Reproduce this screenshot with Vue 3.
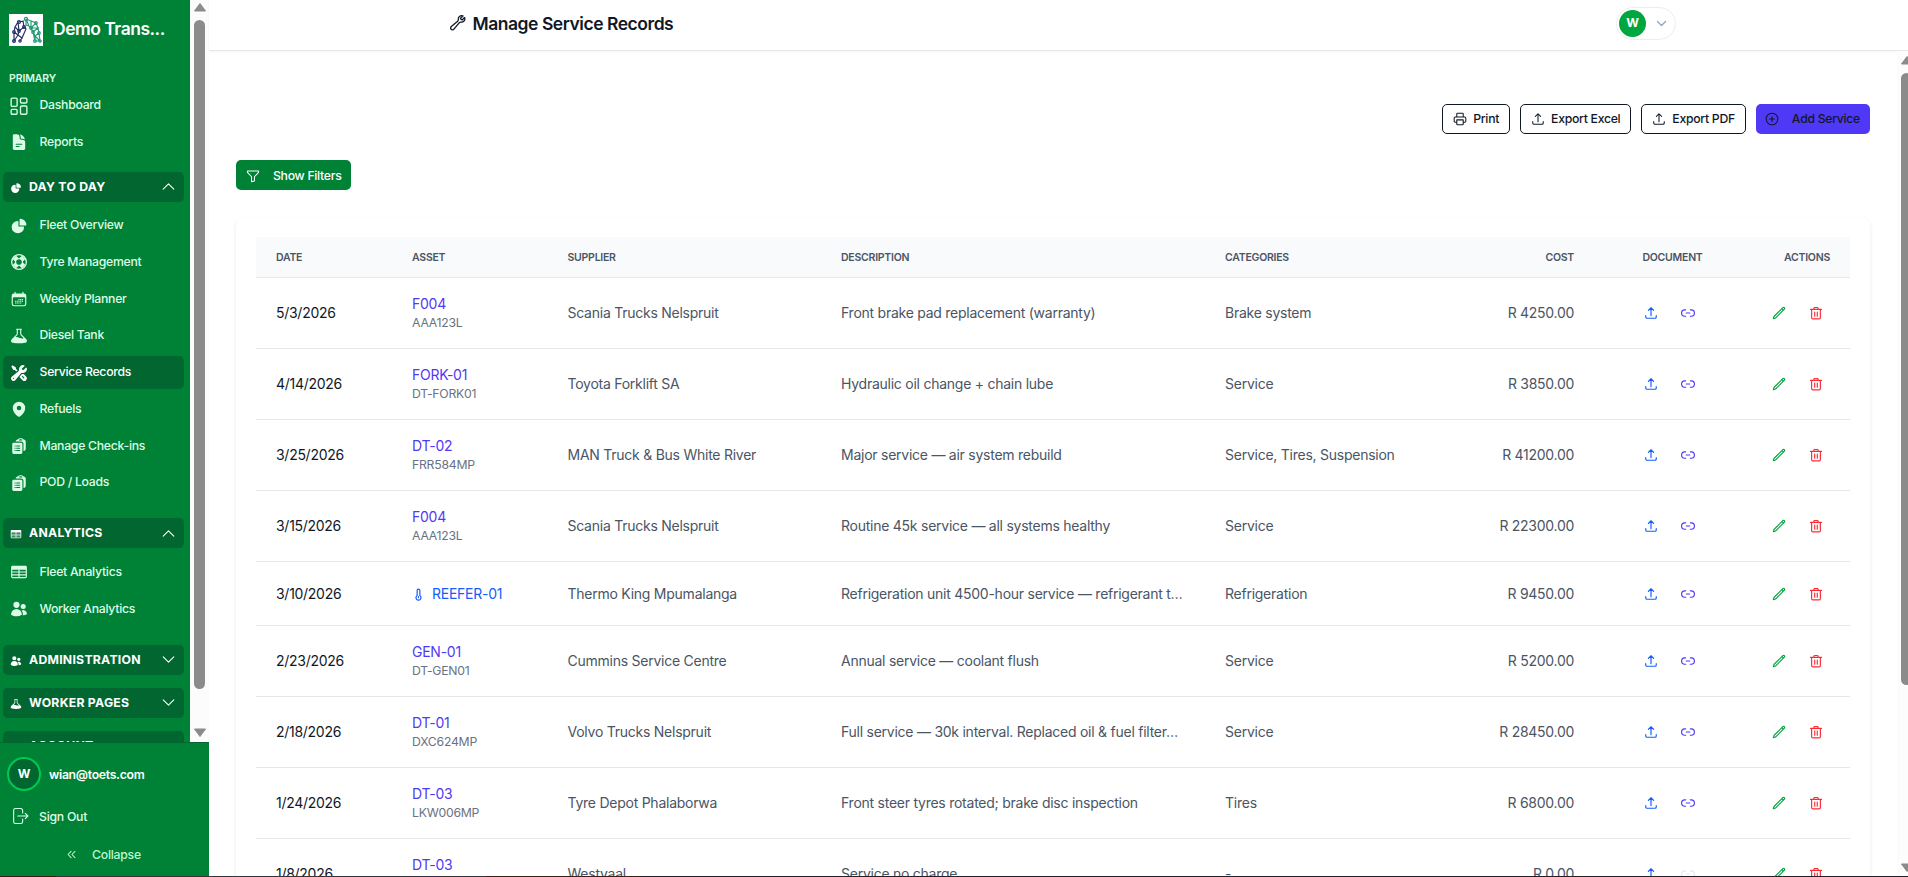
<script setup>

import { ref } from 'vue';

// solid icons (24x24), each one is a list of paths
const solid = {
    pie: [
        'M2.25 13.5a8.25 8.25 0 0 1 8.25-8.25.75.75 0 0 1 .75.75v6.75H18a.75.75 0 0 1 .75.75 8.25 8.25 0 0 1-16.5 0Z',
        'M12.75 3a.75.75 0 0 1 .75-.75 8.25 8.25 0 0 1 8.25 8.25.75.75 0 0 1-.75.75h-7.5a.75.75 0 0 1-.75-.75V3Z'
    ],
    report: [
        'M5.625 1.5c-1.036 0-1.875.84-1.875 1.875v17.25c0 1.035.84 1.875 1.875 1.875h12.75c1.035 0 1.875-.84 1.875-1.875V12.75A3.75 3.75 0 0 0 16.5 9h-1.875a1.875 1.875 0 0 1-1.875-1.875V5.25A3.75 3.75 0 0 0 9 1.5H5.625ZM7.5 15a.75.75 0 0 1 .75-.75h7.5a.75.75 0 0 1 0 1.5h-7.5A.75.75 0 0 1 7.5 15Zm.75 2.25a.75.75 0 0 0 0 1.5H12a.75.75 0 0 0 0-1.5H8.25Z',
        'M12.971 1.816A5.23 5.23 0 0 1 14.25 5.25v1.875c0 .207.168.375.375.375H16.5a5.23 5.23 0 0 1 3.434 1.279 9.768 9.768 0 0 0-6.963-6.963Z'
    ],
    calendar: [
        'M6.75 2.25A.75.75 0 0 1 7.5 3v1.5h9V3A.75.75 0 0 1 18 3v1.5h.75a3 3 0 0 1 3 3v11.25a3 3 0 0 1-3 3H5.25a3 3 0 0 1-3-3V7.5a3 3 0 0 1 3-3H6V3a.75.75 0 0 1 .75-.75Zm13.5 9a1.5 1.5 0 0 0-1.5-1.5H5.25a1.5 1.5 0 0 0-1.5 1.5v7.5a1.5 1.5 0 0 0 1.5 1.5h13.5a1.5 1.5 0 0 0 1.5-1.5v-7.5Z',
        'M11.2 12h1.5v1.5h-1.5zM13.5 12H15v1.5h-1.5zM15.8 12h1.5v1.5h-1.5zM6.8 14.3h1.5v1.5H6.8zM9 14.3h1.5v1.5H9zM11.2 14.3h1.5v1.5h-1.5zM13.5 14.3H15v1.5h-1.5zM15.8 14.3h1.5v1.5h-1.5zM6.8 16.6h1.5v1.5H6.8zM9 16.6h1.5v1.5H9zM11.2 16.6h1.5v1.5h-1.5zM13.5 16.6H15v1.5h-1.5z'
    ],
    beaker: [
        'M10.5 3.798v5.02a3 3 0 0 1-.879 2.121l-2.377 2.377a9.845 9.845 0 0 1 5.091 1.013 8.315 8.315 0 0 0 5.713.636l.285-.071-3.954-3.955a3 3 0 0 1-.879-2.121v-5.02a23.614 23.614 0 0 0-3 0Zm4.5.138a.75.75 0 0 0 .093-1.495A24.837 24.837 0 0 0 12 2.25a25.048 25.048 0 0 0-3.093.191A.75.75 0 0 0 9 3.936v4.882a1.5 1.5 0 0 1-.44 1.06l-6.293 6.294c-1.62 1.621-.903 4.475 1.471 4.88 2.686.46 5.447.698 8.262.698 2.816 0 5.576-.239 8.262-.697 2.373-.406 3.092-3.26 1.47-4.881L15.44 9.879A1.5 1.5 0 0 1 15 8.818V3.936Z'
    ],
    tools: [
        'M12 6.75a5.25 5.25 0 0 1 6.775-5.025.75.75 0 0 1 .313 1.248l-3.32 3.319c.063.475.276.934.641 1.299.365.365.824.578 1.3.64l3.318-3.319a.75.75 0 0 1 1.248.313 5.25 5.25 0 0 1-5.472 6.756c-1.018-.086-1.87.1-2.309.634L7.344 21.3A3.298 3.298 0 1 1 2.7 16.657l8.684-7.151c.533-.44.72-1.291.634-2.309A5.342 5.342 0 0 1 12 6.75ZM4.117 19.125a.75.75 0 0 1 .75-.75h.008a.75.75 0 0 1 .75.75v.008a.75.75 0 0 1-.75.75h-.008a.75.75 0 0 1-.75-.75v-.008Z',
        'm10.076 8.64-2.201-2.2V4.874a.75.75 0 0 0-.364-.643l-3.75-2.25a.75.75 0 0 0-.916.113l-.75.75a.75.75 0 0 0-.113.916l2.25 3.75a.75.75 0 0 0 .643.364h1.564l2.062 2.062 1.575-1.297Z',
        'm12.556 17.329 4.183 4.182a3.375 3.375 0 0 0 4.773-4.773l-3.306-3.305a6.803 6.803 0 0 1-1.53.043c-.394-.034-.682-.006-.867.042a.589.589 0 0 0-.167.063l-3.086 3.748Zm3.414-1.36a.75.75 0 0 1 1.06 0l1.875 1.876a.75.75 0 1 1-1.06 1.06L15.97 17.03a.75.75 0 0 1 0-1.06Z'
    ],
    pin: [
        'm11.54 22.351.07.04.028.016a.76.76 0 0 0 .723 0l.028-.015.071-.041a16.975 16.975 0 0 0 1.144-.742 19.58 19.58 0 0 0 2.683-2.282c1.944-1.99 3.963-4.98 3.963-8.827a8.25 8.25 0 0 0-16.5 0c0 3.846 2.02 6.837 3.963 8.827a19.58 19.58 0 0 0 2.682 2.282 16.975 16.975 0 0 0 1.145.742ZM12 13.5a3 3 0 1 0 0-6 3 3 0 0 0 0 6Z'
    ],
    clipboard: [
        'M7.502 6h7.128A3.375 3.375 0 0 1 18 9.375v9.375a3 3 0 0 0 3-3V6.108c0-1.505-1.125-2.811-2.664-2.94a48.972 48.972 0 0 0-.673-.05A3 3 0 0 0 15 1.5h-1.5a3 3 0 0 0-2.663 1.618c-.225.015-.45.032-.673.05C8.662 3.295 7.554 4.542 7.502 6ZM13.5 3A1.5 1.5 0 0 0 12 4.5h4.5A1.5 1.5 0 0 0 15 3h-1.5Z',
        'M3 9.375C3 8.339 3.84 7.5 4.875 7.5h9.75c1.036 0 1.875.84 1.875 1.875v11.25c0 1.035-.84 1.875-1.875 1.875h-9.75A1.875 1.875 0 0 1 3 20.625V9.375ZM6 11.25h1.5v1.5H6zM8.25 11.25h5.25v1.5H8.25zM6 14.25h1.5v1.5H6zM8.25 14.25h5.25v1.5H8.25zM6 17.25h1.5v1.5H6zM8.25 17.25h5.25v1.5H8.25z'
    ],
    table: [
        'M1.5 5.625c0-1.036.84-1.875 1.875-1.875h17.25c1.035 0 1.875.84 1.875 1.875v12.75c0 1.035-.84 1.875-1.875 1.875H3.375A1.875 1.875 0 0 1 1.5 18.375V5.625ZM12.75 9H21v2.25h-8.25zM12.75 12.75H21V15h-8.25zM12.75 16.5H21v2.25h-8.25zM3 9h8.25v2.25H3zM3 12.75h8.25V15H3zM3 16.5h8.25v2.25H3z'
    ],
    users: [
        'M4.5 6.375a4.125 4.125 0 1 1 8.25 0 4.125 4.125 0 0 1-8.25 0ZM14.25 8.625a3.375 3.375 0 1 1 6.75 0 3.375 3.375 0 0 1-6.75 0ZM1.5 19.125a7.125 7.125 0 0 1 14.25 0v.003l-.001.119a.75.75 0 0 1-.363.63 13.067 13.067 0 0 1-6.761 1.873c-2.472 0-4.786-.684-6.76-1.873a.75.75 0 0 1-.364-.63l-.001-.122ZM17.25 19.128l-.001.144a2.25 2.25 0 0 1-.233.96 10.088 10.088 0 0 0 5.06-1.01.75.75 0 0 0 .42-.643 4.875 4.875 0 0 0-6.957-4.611 8.586 8.586 0 0 1 1.71 5.157v.003Z'
    ]
}

// outline icons (24x24)
const line = {
    upload: 'M3 16.5v2.25A2.25 2.25 0 0 0 5.25 21h13.5A2.25 2.25 0 0 0 21 18.75V16.5m-13.5-9L12 3m0 0 4.5 4.5M12 3v13.5',
    link: 'M8 6.5H6.5a5.5 5.5 0 0 0 0 11H8M16 6.5h1.5a5.5 5.5 0 0 1 0 11H16M9 12h6',
    pencil: 'm16.862 4.487 1.687-1.688a1.875 1.875 0 1 1 2.652 2.652L6.832 19.82a4.5 4.5 0 0 1-1.897 1.13l-2.685.8.8-2.685a4.5 4.5 0 0 1 1.13-1.897L16.863 4.487Zm0 0L19.5 7.125',
    trash: 'M2.5 5.8h19M8.5 5.8V3.5a1 1 0 0 1 1-1h5a1 1 0 0 1 1 1v2.3M4.5 5.8V20a2 2 0 0 0 2 2h11a2 2 0 0 0 2-2V5.8M9.8 10.5v7M14.2 10.5v7',
    funnel: 'M2.5 3.5h19v2.2l-7 7.6v7.2l-5 1.3v-8.5l-7-7.6Z',
    printer: 'M6.5 8.5V3a1 1 0 0 1 1-1h9a1 1 0 0 1 1 1v5.5M6 17.5H4a2 2 0 0 1-2-2v-5a2 2 0 0 1 2-2h16a2 2 0 0 1 2 2v5a2 2 0 0 1-2 2h-2M6.5 13.5h11V21a1 1 0 0 1-1 1h-9a1 1 0 0 1-1-1Z',
    plus: 'M12 7.8v8.4M7.8 12h8.4M22 12a10 10 0 1 1-20 0 10 10 0 0 1 20 0Z',
    wrench: 'M21.75 6.75a4.5 4.5 0 0 1-4.884 4.484c-1.076-.091-2.264.071-2.95.904l-7.152 8.684a2.548 2.548 0 1 1-3.586-3.586l8.684-7.152c.833-.686.995-1.874.904-2.95a4.5 4.5 0 0 1 6.336-4.486l-3.276 3.276a3.004 3.004 0 0 0 2.25 2.25l3.276-3.276c.256.565.398 1.192.398 1.852Z',
    thermo: 'M9.5 14V4.5a2.5 2.5 0 0 1 5 0V14a4.6 4.6 0 1 1-5 0ZM12 16v2',
    up: 'm4.5 15.75 7.5-7.5 7.5 7.5',
    down: 'm19.5 8.25-7.5 7.5-7.5-7.5',
    signout: 'M15.5 8V4.5A2.5 2.5 0 0 0 13 2H6a2.5 2.5 0 0 0-2.5 2.5v15A2.5 2.5 0 0 0 6 22h7a2.5 2.5 0 0 0 2.5-2.5V16M9 12h13.5m-3.5-3.5 3.5 3.5-3.5 3.5',
    collapse: 'm11 5-6.5 7 6.5 7M19.5 5 13 12l6.5 7'
}

const sections = ref([
    {
        title: 'DAY TO DAY', icon: 'pie', open: true,
        items: [
            { label: 'Fleet Overview', icon: 'pie' },
            { label: 'Tyre Management', icon: 'tyre' },
            { label: 'Weekly Planner', icon: 'calendar' },
            { label: 'Diesel Tank', icon: 'beaker' },
            { label: 'Service Records', icon: 'tools' },
            { label: 'Refuels', icon: 'pin' },
            { label: 'Manage Check-ins', icon: 'clipboard' },
            { label: 'POD / Loads', icon: 'clipboard' }
        ]
    },
    {
        title: 'ANALYTICS', icon: 'table', open: true,
        items: [
            { label: 'Fleet Analytics', icon: 'table' },
            { label: 'Worker Analytics', icon: 'users' }
        ]
    },
    { title: 'ADMINISTRATION', icon: 'users', open: false, items: [] },
    { title: 'WORKER PAGES', icon: 'beaker', open: false, items: [] },
    { title: 'ACCOUNT', icon: 'users', open: false, items: [] }
])

const active = ref('Service Records');

const records = [
    { date: '5/3/2026', asset: 'F004', plate: 'AAA123L', supplier: 'Scania Trucks Nelspruit', description: 'Front brake pad replacement (warranty)', categories: 'Brake system', cost: '4250.00', doc: true },
    { date: '4/14/2026', asset: 'FORK-01', plate: 'DT-FORK01', supplier: 'Toyota Forklift SA', description: 'Hydraulic oil change + chain lube', categories: 'Service', cost: '3850.00', doc: true },
    { date: '3/25/2026', asset: 'DT-02', plate: 'FRR584MP', supplier: 'MAN Truck & Bus White River', description: 'Major service — air system rebuild', categories: 'Service, Tires, Suspension', cost: '41200.00', doc: true },
    { date: '3/15/2026', asset: 'F004', plate: 'AAA123L', supplier: 'Scania Trucks Nelspruit', description: 'Routine 45k service — all systems healthy', categories: 'Service', cost: '22300.00', doc: true },
    { date: '3/10/2026', asset: 'REEFER-01', plate: '', reefer: true, supplier: 'Thermo King Mpumalanga', description: 'Refrigeration unit 4500-hour service — refrigerant t…', categories: 'Refrigeration', cost: '9450.00', doc: true },
    { date: '2/23/2026', asset: 'GEN-01', plate: 'DT-GEN01', supplier: 'Cummins Service Centre', description: 'Annual service — coolant flush', categories: 'Service', cost: '5200.00', doc: true },
    { date: '2/18/2026', asset: 'DT-01', plate: 'DXC624MP', supplier: 'Volvo Trucks Nelspruit', description: 'Full service — 30k interval. Replaced oil & fuel filter…', categories: 'Service', cost: '28450.00', doc: true },
    { date: '1/24/2026', asset: 'DT-03', plate: 'LKW006MP', supplier: 'Tyre Depot Phalaborwa', description: 'Front steer tyres rotated; brake disc inspection', categories: 'Tires', cost: '6800.00', doc: true },
    { date: '1/8/2026', asset: 'DT-03', plate: 'LKW006MP', supplier: 'Westvaal', description: 'Service no charge', categories: '-', cost: '0.00', doc: false }
]

const toggle = (section) => {
    section.open = !section.open;
}
</script>

<template>
    <div class="app">
        <aside class="sidebar">
            <div class="nav-area">
                <nav class="nav">
                    <div class="brand">
                        <svg class="logo" viewBox="0 0 34 32">
                            <rect width="34" height="32" fill="#fff" />
                            <g fill="none" stroke="#28306b" stroke-width="1.2">
                                <path d="M15 7 9 8 6 13 5 18 5 27l4-6-4-3M6 13l4 4 5-4-1-6M9 8l1 9-1 4 4 3 4-9-2-2M9 21l-4 6M13 24l-2 3" />
                                <circle cx="5" cy="27" r="1.4" /><circle cx="11" cy="27" r="1.2" /><circle cx="5" cy="18" r="1.3" />
                                <circle cx="10" cy="8" r="1.5" /><circle cx="15" cy="13" r="1.4" /><circle cx="10" cy="17" r="1.3" />
                            </g>
                            <g fill="none" stroke="#279b78" stroke-width="1.2">
                                <path d="M17 5l5 2 5 2 2 5 1 5 1 8-5-5 4-3M27 9l-5 5 7 0-5 4-2-4 0-7M24 18l2 9 0-5-2-4-4-6-3-7v6l3 1M26 27l5 0" />
                                <circle cx="17" cy="5" r="1.6" /><circle cx="22" cy="14" r="1.3" /><circle cx="27" cy="9" r="1.3" />
                                <circle cx="30" cy="19" r="1.3" /><circle cx="31" cy="27" r="1.2" /><circle cx="26" cy="27" r="1.4" /><circle cx="24" cy="18" r="1.3" />
                            </g>
                        </svg>
                        <span class="brand-name">Demo Trans...</span>
                    </div>

                    <div class="nav-label">PRIMARY</div>
                    <div class="nav-items">
                        <a class="nav-item">
                            <svg class="nav-icon outline" viewBox="0 0 24 24">
                                <rect x="1.5" y="1.5" width="8" height="11" rx="1.5" />
                                <rect x="14" y="1.5" width="8.5" height="6.5" rx="1.5" />
                                <rect x="1.5" y="16.5" width="8" height="6.5" rx="1.5" />
                                <rect x="14" y="12" width="8.5" height="11" rx="1.5" />
                            </svg>
                            Dashboard
                        </a>
                        <a class="nav-item">
                            <svg class="nav-icon" viewBox="0 0 24 24"><path v-for="d in solid.report" :key="d" :d="d" /></svg>
                            Reports
                        </a>
                    </div>

                    <div v-for="section in sections" :key="section.title" class="section" :class="{ open: section.open }">
                        <button class="section-head" @click="toggle(section)">
                            <svg class="section-icon" viewBox="0 0 24 24"><path v-for="d in solid[section.icon]" :key="d" :d="d" /></svg>
                            <span>{{ section.title }}</span>
                            <svg class="chevron outline" viewBox="0 0 24 24"><path :d="section.open ? line.up : line.down" /></svg>
                        </button>
                        <div v-if="section.open" class="nav-items">
                            <a v-for="item in section.items" :key="item.label" class="nav-item"
                                :class="{ active: item.label === active }" @click="active = item.label">
                                <svg v-if="item.icon === 'tyre'" class="nav-icon tyre" viewBox="0 0 24 24">
                                    <circle cx="12" cy="12" r="9.8" />
                                    <circle cx="12" cy="12" r="4.6" />
                                    <path d="M5.8 5.8 9 9M18.2 5.8 15 9M5.8 18.2 9 15M18.2 18.2 15 15" />
                                </svg>
                                <svg v-else class="nav-icon" viewBox="0 0 24 24"><path v-for="d in solid[item.icon]" :key="d" :d="d" /></svg>
                                {{ item.label }}
                            </a>
                        </div>
                    </div>
                </nav>
                <div class="scrollbar">
                    <svg viewBox="0 0 14 10"><path d="M7 1 12.5 8.5h-11Z" /></svg>
                    <div class="thumb"></div>
                    <svg viewBox="0 0 14 10"><path d="M7 9 1.5 1.5h11Z" /></svg>
                </div>
            </div>

            <div class="side-footer">
                <div class="account">
                    <div class="account-avatar">W</div>
                    <span>wian@toets.com</span>
                </div>
                <a class="sign-out">
                    <svg class="outline" viewBox="0 0 24 24"><path :d="line.signout" /></svg>
                    Sign Out
                </a>
                <a class="collapse">
                    <svg class="outline" viewBox="0 0 24 24"><path :d="line.collapse" /></svg>
                    Collapse
                </a>
            </div>
        </aside>

        <div class="page">
            <header class="topbar">
                <h1>
                    <svg class="outline" viewBox="0 0 24 24"><path :d="line.wrench" /></svg>
                    Manage Service Records
                </h1>
                <div class="user-menu">
                    <div class="user-avatar">W</div>
                    <svg class="outline" viewBox="0 0 24 24"><path :d="line.down" /></svg>
                </div>
            </header>

            <div class="body">
                <main class="content">
                    <div class="toolbar">
                        <button class="btn"><svg class="outline" viewBox="0 0 24 24"><path :d="line.printer" /></svg>Print</button>
                        <button class="btn"><svg class="outline" viewBox="0 0 24 24"><path :d="line.upload" /></svg>Export Excel</button>
                        <button class="btn"><svg class="outline" viewBox="0 0 24 24"><path :d="line.upload" /></svg>Export PDF</button>
                        <button class="btn btn-add"><svg class="outline" viewBox="0 0 24 24"><path :d="line.plus" /></svg>Add Service</button>
                    </div>

                    <button class="btn-filters"><svg class="outline" viewBox="0 0 24 24"><path :d="line.funnel" /></svg>Show Filters</button>

                    <div class="card">
                        <table>
                            <colgroup>
                                <col class="c-date"><col class="c-asset"><col class="c-supplier"><col class="c-desc">
                                <col class="c-cat"><col class="c-cost"><col class="c-doc"><col class="c-act">
                            </colgroup>
                            <thead>
                                <tr>
                                    <th>DATE</th>
                                    <th>ASSET</th>
                                    <th>SUPPLIER</th>
                                    <th>DESCRIPTION</th>
                                    <th>CATEGORIES</th>
                                    <th class="right">COST</th>
                                    <th class="center">DOCUMENT</th>
                                    <th class="right">ACTIONS</th>
                                </tr>
                            </thead>
                            <tbody>
                                <tr v-for="record in records" :key="record.date" :class="{ short: record.reefer }">
                                    <td class="date">{{ record.date }}</td>
                                    <td>
                                        <a v-if="record.reefer" class="reefer">
                                            <svg class="outline" viewBox="0 0 24 24"><path :d="line.thermo" /></svg>{{ record.asset }}
                                        </a>
                                        <template v-else>
                                            <a class="asset">{{ record.asset }}</a>
                                            <div class="plate">{{ record.plate }}</div>
                                        </template>
                                    </td>
                                    <td>{{ record.supplier }}</td>
                                    <td>{{ record.description }}</td>
                                    <td>{{ record.categories }}</td>
                                    <td class="cost right">R {{ record.cost }}</td>
                                    <td>
                                        <div class="icons docs">
                                            <svg class="outline blue" viewBox="0 0 24 24"><path :d="line.upload" /></svg>
                                            <svg class="outline" :class="record.doc ? 'indigo' : 'muted'" viewBox="0 0 24 24"><path :d="line.link" /></svg>
                                        </div>
                                    </td>
                                    <td>
                                        <div class="icons actions">
                                            <svg class="outline green" viewBox="0 0 24 24"><path :d="line.pencil" /></svg>
                                            <svg class="outline red" viewBox="0 0 24 24"><path :d="line.trash" /></svg>
                                        </div>
                                    </td>
                                </tr>
                            </tbody>
                        </table>
                    </div>
                </main>
                <div class="scrollbar main-scroll">
                    <svg viewBox="0 0 14 10"><path d="M7 1 12.5 8.5h-11Z" /></svg>
                    <div class="thumb"></div>
                    <svg viewBox="0 0 14 10"><path d="M7 9 1.5 1.5h11Z" /></svg>
                </div>
            </div>
        </div>
        <div class="edge"></div>
    </div>
</template>

<style>
body {
    margin: 0;
    overflow: hidden;
}
</style>

<style scoped>
* {
    box-sizing: border-box;
}

.app {
    display: flex;
    width: 1908px;
    height: 877px;
    overflow: hidden;
    position: relative;
    background: #fff;
    font-family: Inter, "Liberation Sans", sans-serif;
    font-size: 14px;
    letter-spacing: -.25px;
    color: #4a5565;
}

button {
    font-family: inherit;
    letter-spacing: -.3px;
    border: none;
    cursor: pointer;
}

svg {
    flex: none;
    fill: currentColor;
    fill-rule: evenodd;
}

.outline {
    fill: none;
    stroke: currentColor;
    stroke-width: 1.8;
    stroke-linecap: round;
    stroke-linejoin: round;
}

/* sidebar */
.sidebar {
    display: flex;
    flex-direction: column;
    width: 209px;
    flex: none;
    background: #008236;
    color: #dcfce7;
}

.nav-area {
    display: flex;
    height: 742px;
    overflow: hidden;
}

.nav {
    width: 190px;
    padding: 0 6px 0 3px;
    font-size: 12.25px;
    font-weight: 500;
    letter-spacing: -.28px;
}

.brand {
    display: flex;
    align-items: center;
    gap: 10px;
    padding: 14px 0 0 6px;
    color: #fff;
}

.logo {
    width: 34px;
    height: 32px;
}

.brand-name {
    font-size: 17.5px;
    font-weight: 600;
    letter-spacing: -.5px;
    line-height: 24px;
    padding-bottom: 2px;
    white-space: nowrap;
}

.nav-label {
    margin: 24px 0 0 6px;
    font-size: 10.5px;
    font-weight: 600;
    letter-spacing: -.1px;
    line-height: 17px;
}

.nav-items {
    display: flex;
    flex-direction: column;
    gap: 3.5px;
}

.nav-label + .nav-items {
    margin-top: 1.5px;
    padding-bottom: 13px;
}

.nav-item {
    display: flex;
    align-items: center;
    gap: 11.5px;
    height: 33.25px;
    padding: 0 7px 1px;
    border-radius: 5px;
    cursor: pointer;
}

.nav-item.active {
    background: #016630;
    color: #fff;
}

.nav-icon {
    width: 18px;
    height: 18px;
    margin-top: 2px;
}

.tyre {
    fill: none;
    stroke: currentColor;
    stroke-width: 1.7;
}

.tyre path {
    stroke-width: 6.5;
}

.section {
    margin-bottom: 13px;
}

.section.open {
    margin-bottom: 19.25px;
}

.section-head {
    display: flex;
    align-items: center;
    width: 181px;
    height: 30px;
    padding: 0 7px;
    border-radius: 5px;
    background: #016630;
    color: #fff;
    font-size: 12.25px;
    font-weight: 700;
    letter-spacing: .25px;
}

.section-head span {
    flex: 1;
    text-align: left;
    margin-left: 7px;
    padding-bottom: 1px;
}

.section-icon {
    width: 12px;
    height: 12px;
    margin-top: 2px;
}

.chevron {
    width: 17px;
    height: 17px;
    stroke-width: 1.5;
}

.section .nav-items {
    padding-top: 7px;
}

.scrollbar {
    display: flex;
    flex-direction: column;
    align-items: center;
    width: 19px;
    height: 742px;
    padding: 2px 0 4px;
    background: #fcfcfc;
    color: #8b8b8b;
}

.scrollbar svg {
    width: 14px;
    height: 11px;
    stroke: currentColor;
    stroke-linejoin: round;
}

.scrollbar .thumb {
    width: 11px;
    height: 669px;
    margin: 7px 0 auto;
    border-radius: 6px;
    background: #8b8b8b;
}

.side-footer {
    height: 135px;
    padding-top: 14px;
    border-top: 1px solid #016630;
    font-size: 12.25px;
    font-weight: 500;
}

.account {
    display: flex;
    align-items: center;
    gap: 8px;
    padding-left: 7px;
    color: #fff;
    font-weight: 600;
    letter-spacing: -.3px;
}

.account-avatar {
    display: flex;
    align-items: center;
    justify-content: center;
    width: 34px;
    height: 34px;
    padding-bottom: 1px;
    border: 2px solid #00c950;
    border-radius: 50%;
    background: #016630;
    font-weight: 700;
}

.sign-out {
    display: flex;
    align-items: center;
    gap: 10px;
    height: 20px;
    margin: 15px 0 0 11px;
}

.sign-out svg {
    width: 18px;
    height: 18px;
    stroke-width: 1.5;
}

.collapse {
    display: flex;
    align-items: center;
    gap: 15px;
    height: 20px;
    margin: 18px 0 0 66px;
    color: #b9f8cf;
}

.collapse svg {
    width: 11px;
    height: 11px;
    stroke-width: 2.2;
}

/* top bar */
.page {
    flex: 1;
    display: flex;
    flex-direction: column;
    min-width: 0;
}

.topbar {
    display: flex;
    align-items: center;
    justify-content: space-between;
    height: 51px;
    flex: none;
    padding: 0 232px 4px 240px;
    border-bottom: 1px solid #e5e7eb;
    box-shadow: 0 1px 2px rgba(0, 0, 0, .04);
}

h1 {
    display: flex;
    align-items: center;
    gap: 6px;
    margin: 0;
    font-size: 17.5px;
    font-weight: 600;
    letter-spacing: -.46px;
    color: #101828;
}

h1 svg {
    width: 17.5px;
    height: 17.5px;
}

.user-menu {
    display: flex;
    align-items: center;
    gap: 9px;
    width: 60px;
    height: 33px;
    padding-left: 2px;
    border: 1px solid #ebedf0;
    border-radius: 17px;
    color: #90a1b9;
}

.user-avatar {
    display: flex;
    align-items: center;
    justify-content: center;
    width: 27px;
    height: 27px;
    border-radius: 50%;
    background: #00a63e;
    color: #fff;
    font-size: 12.25px;
    font-weight: 700;
    padding-bottom: 1px;
}

.user-menu svg {
    width: 13px;
    height: 13px;
    margin-top: 1px;
    stroke-width: 2.2;
}

/* content */
.body {
    display: flex;
    flex: 1;
    min-height: 0;
    overflow: hidden;
}

.content {
    width: 1688px;
    flex: none;
    padding: 53px 27px 0;
}

.toolbar {
    display: flex;
    justify-content: flex-end;
    gap: 10px;
}

.btn {
    display: flex;
    align-items: center;
    gap: 6px;
    height: 30px;
    padding: 0 10px 1px;
    border: 1px solid #101828;
    border-radius: 5px;
    background: #fff;
    color: #101828;
    font-size: 12.25px;
    font-weight: 500;
    white-space: nowrap;
}

.btn svg,
.btn-filters svg {
    width: 14px;
    height: 14px;
    margin-top: 1px;
}

.btn-add {
    gap: 12.5px;
    padding: 0 10px 1px 9.5px;
    border: none;
    background: #4f39f6;
}

.btn-filters {
    display: flex;
    align-items: center;
    gap: 13px;
    height: 30px;
    margin-top: 26px;
    padding: 0 10px;
    border-radius: 5px;
    background: #008236;
    color: #fff;
    font-size: 12.25px;
    font-weight: 500;
}

.card {
    width: 1634px;
    margin-top: 27px;
    padding: 20px;
    border-radius: 9px;
    box-shadow: 0 2px 4px rgba(0, 0, 0, .09);
}

table {
    width: 1594px;
    table-layout: fixed;
    border-collapse: separate;
    border-spacing: 0;
}

.c-date { width: 136px; }
.c-asset { width: 155.5px; }
.c-supplier { width: 273.5px; }
.c-desc { width: 384px; }
.c-cat { width: 229px; }
.c-cost { width: 160px; }
.c-doc { width: 157px; }
.c-act { width: 99px; }

th {
    height: 41px;
    padding: 0 20px;
    background: #f9fafb;
    border-bottom: 1px solid #e5e7eb;
    color: #4a5565;
    font-size: 10.5px;
    font-weight: 600;
    letter-spacing: -.24px;
    text-align: left;
}

td {
    height: 71px;
    padding: 0 20px;
    border-bottom: 1px solid #e5e7eb;
    white-space: nowrap;
    line-height: 18px;
}

.short td {
    height: 64px;
}

td.date {
    color: #101828;
}

td.date,
td.cost {
    letter-spacing: -.28px;
}

.right {
    text-align: right;
}

.center {
    text-align: center;
}

.asset {
    display: block;
    padding-top: 1px;
    color: #4f39f6;
}

.reefer {
    display: flex;
    align-items: center;
    gap: 7px;
    color: #155dfc;
}

.reefer svg {
    width: 13px;
    height: 13px;
    margin-top: 2px;
    stroke-width: 2.2;
}

.plate {
    margin-top: 1px;
    font-size: 12.25px;
    color: #6a7282;
}

.icons {
    display: flex;
    justify-content: center;
    gap: 23px;
}

.icons svg {
    width: 14px;
    height: 14px;
    stroke-width: 2;
}

.docs {
    margin-right: 6px;
}

.actions {
    justify-content: flex-end;
    margin-right: 7px;
}

.blue { color: #155dfc; }
.indigo { color: #4f39f6; }
.muted { color: #e5e7eb; }
.green { color: #00a63e; }
.red { color: #fb2c36; }

.main-scroll {
    flex: none;
    height: 826px;
    padding-top: 4px;
}

.main-scroll .thumb {
    height: 612px;
}

/* dark strip along the bottom of the window */
.edge {
    position: absolute;
    left: 0;
    right: 0;
    bottom: 0;
    height: 1px;
    background: linear-gradient(90deg, #3a1d12 56px, #33363c 56px, #33363c 486px, #3b2019 486px, #3b2019 640px, #1f2126 640px);
}
</style>
